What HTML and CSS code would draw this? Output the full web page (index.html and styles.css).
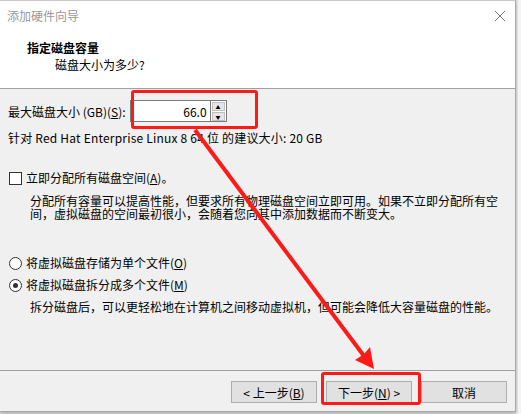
FILE: index.html
```html
<!DOCTYPE html>
<html lang="zh-CN">
<head>
<meta charset="UTF-8">
<title>添加硬件向导</title>
<link rel="stylesheet" href="styles.css">
</head>
<body>
<div class="dialog">
  <!-- Title bar -->
  <div class="titlebar">
    <span class="title">添加硬件向导</span>
    <svg class="close" width="12" height="12" viewBox="0 0 12 12">
      <path d="M1 1 L11 11 M11 1 L1 11" stroke="#777" stroke-width="1" fill="none"/>
    </svg>
  </div>

  <!-- Header -->
  <div class="header">
    <div class="heading">指定磁盘容量</div>
    <div class="subheading">磁盘大小为多少?</div>
  </div>

  <!-- Content -->
  <div class="content">
    <div class="size-row">
      <span>最大磁盘大小 (GB)(<u>S</u>):</span>
      <div class="spin">
        <input class="spin-input" type="text" value="66.0">
        <div class="spin-buttons">
          <div class="spin-btn">&#9650;</div>
          <div class="spin-btn">&#9660;</div>
        </div>
      </div>
    </div>
    <div class="hint">针对 Red Hat Enterprise Linux 8 64 位 的建议大小: 20 GB</div>

    <label class="option check-row">
      <span class="checkbox"></span>立即分配所有磁盘空间(<u>A</u>)。
    </label>
    <p class="desc">分配所有容量可以提高性能，但要求所有物理磁盘空间立即可用。如果不立即分配所有空<br>间，虚拟磁盘的空间最初很小，会随着您向其中添加数据而不断变大。</p>

    <label class="option radio-first">
      <span class="radio"></span>将虚拟磁盘存储为单个文件(<u>O</u>)
    </label>
    <label class="option radio-second">
      <span class="radio checked"></span>将虚拟磁盘拆分成多个文件(<u>M</u>)
    </label>
    <p class="desc desc-split">拆分磁盘后，可以更轻松地在计算机之间移动虚拟机，但可能会降低大容量磁盘的性能。</p>
  </div>

  <!-- Footer buttons -->
  <div class="footer">
    <button class="btn">&lt; 上一步(<u>B</u>)</button>
    <button class="btn">下一步(<u>N</u>) &gt;</button>
    <button class="btn">取消</button>
  </div>
</div>

<div class="side"></div>

<!-- Annotations drawn on top of the screenshot -->
<div class="mark mark-input"></div>
<div class="mark mark-next"></div>
<svg class="arrow" width="521" height="414" viewBox="0 0 521 414">
  <line x1="195" y1="130" x2="364" y2="356" stroke="#ff1a1a" stroke-width="4"/>
  <polygon points="374,369 355,360 364,354 370,347" fill="#ff1a1a"/>
</svg>
</body>
</html>
```

FILE: styles.css
```css
body {
  margin: 0;
  padding: 0;
  width: 521px;
  height: 414px;
  overflow: hidden;
  background-color: #e6e6e6;
  font-family: "Noto Sans CJK SC", "Microsoft YaHei", sans-serif;
  font-size: 12px;
  color: #000;
  position: relative;
}

.dialog {
  width: 515px;
  height: 410px;
  border-top: 1px solid #c8c8c8;
  border-right: 1px solid #a8a8a8;
  border-bottom: 1px solid #a8a8a8;
  background-color: #f0f0f0;
  box-shadow: 0 2px 4px rgba(0, 0, 0, 0.25);
  display: flex;
  flex-direction: column;
}

.titlebar {
  height: 29px;
  background-color: #fff;
  display: flex;
  align-items: center;
  justify-content: space-between;
  padding: 0 9px 0 7px;
}
.title {
  color: #999;
  line-height: 14px;
  margin-top: 1px;
}
.close {
  display: block;
}

.header {
  background-color: #fff;
  border-bottom: 1px solid #a0a0a0;
  padding-top: 11px;
  box-sizing: border-box;
  height: 59px;
}
.heading {
  font-weight: bold;
  line-height: 14px;
  padding-left: 27px;
}
.subheading {
  line-height: 14px;
  margin-top: 3px;
  padding-left: 55px;
}

.content {
  height: 281px;
  box-sizing: border-box;
  padding: 11px 8px 0 8px;
}

.size-row {
  display: flex;
  align-items: center;
  height: 22px;
}
.spin {
  display: flex;
  margin-left: 4px;
  height: 22px;
}
.spin-input {
  width: 80px;
  height: 22px;
  box-sizing: border-box;
  border: 1px solid #7a7a7a;
  border-right: none;
  padding: 0 3px 0 0;
  text-align: right;
  font-family: inherit;
  font-size: 12px;
  color: #000;
  background-color: #fff;
  outline: none;
}
.spin-buttons {
  width: 17px;
  height: 22px;
  box-sizing: border-box;
  border: 1px solid #7a7a7a;
  display: flex;
  flex-direction: column;
  background-color: #fff;
  padding: 1px;
  gap: 1px;
}
.spin-btn {
  flex: 1;
  background-color: #e6e6e6;
  border: 1px solid #c0c0c0;
  font-size: 5px;
  line-height: 7px;
  text-align: center;
  color: #000;
}

.hint {
  margin-top: 9px;
  line-height: 14px;
  letter-spacing: 0.2px;
}

.option {
  display: flex;
  align-items: center;
  line-height: 14px;
}
.check-row {
  margin-top: 26px;
}
.checkbox {
  width: 11px;
  height: 11px;
  border: 1px solid #333;
  background-color: #fff;
  margin: 0 4px 0 1px;
}
.desc {
  margin: 9px 0 0 22px;
  line-height: 13px;
}
.radio-first {
  margin-top: 36px;
}
.radio-second {
  margin-top: 8px;
}
.radio {
  width: 11px;
  height: 11px;
  border: 1px solid #333;
  border-radius: 50%;
  background-color: #fff;
  margin: 0 4px 0 1px;
  position: relative;
}
.radio.checked::after {
  content: "";
  position: absolute;
  left: 3px;
  top: 3px;
  width: 5px;
  height: 5px;
  border-radius: 50%;
  background-color: #333;
}
.desc-split {
  margin-top: 8px;
}

.footer {
  border-top: 1px solid #a0a0a0;
  flex: 1;
  display: flex;
  justify-content: flex-end;
  align-items: flex-start;
  gap: 9px;
  padding: 10px 8px 0 0;
}
.btn {
  width: 86px;
  height: 22px;
  background-color: #e1e1e1;
  border: 1px solid #adadad;
  font-family: inherit;
  font-size: 12px;
  color: #000;
  padding: 0;
}

.side {
  position: absolute;
  left: 517px;
  top: 0;
  width: 4px;
  height: 414px;
  background-color: #f4f4f4;
  border-left: 1px solid #ddd;
}

.mark {
  position: absolute;
  border: 3px solid #ff1a1a;
  border-radius: 3px;
  box-sizing: border-box;
}
.mark-input {
  left: 131px;
  top: 90px;
  width: 127px;
  height: 39px;
}
.mark-next {
  left: 321px;
  top: 372px;
  width: 100px;
  height: 33px;
}
.arrow {
  position: absolute;
  left: 0;
  top: 0;
}
```
